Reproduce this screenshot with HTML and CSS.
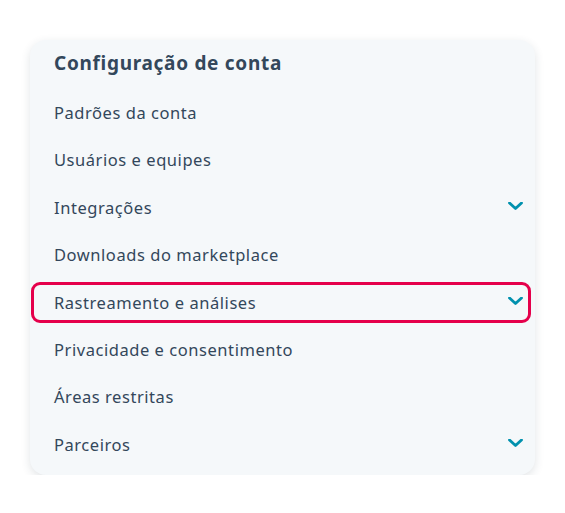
FILE: index.html
```html
<!DOCTYPE html>
<html lang="pt-BR">
<head>
	<meta charset="utf-8">
	<title>Configuração de conta</title>
	<link rel="stylesheet" href="styles.css">
</head>
<body>
	<nav class="card">
		<h2 class="title">Configuração de conta</h2>
		<ul class="menu">
			<li class="item">Padrões da conta</li>
			<li class="item">Usuários e equipes</li>
			<li class="item">Integrações
				<svg class="chevron" viewBox="0 0 15 8"><polyline points="1.5,1 7.5,6.5 13.5,1"/></svg>
			</li>
			<li class="item">Downloads do marketplace</li>
			<li class="item active">Rastreamento e análises
				<svg class="chevron" viewBox="0 0 15 8"><polyline points="1.5,1 7.5,6.5 13.5,1"/></svg>
			</li>
			<li class="item">Privacidade e consentimento</li>
			<li class="item">Áreas restritas</li>
			<li class="item">Parceiros
				<svg class="chevron" viewBox="0 0 15 8"><polyline points="1.5,1 7.5,6.5 13.5,1"/></svg>
			</li>
		</ul>
	</nav>
</body>
</html>
```

FILE: styles.css
```css
* {
	box-sizing: border-box;
}

body {
	margin: 0;
	padding: 40px 30px 0 30px;
	background-color: #ffffff;
	font-family: "Noto Sans", sans-serif;
	color: #33475b;
}

.card {
	width: 505px;
	padding: 0 4px 10px 1px;
	background-color: #f5f8fa;
	border-radius: 16px;
	box-shadow: 0 3px 10px rgba(45, 62, 80, 0.14);
}

.title {
	margin: 0;
	padding: 9px 0 0 23px;
	height: 52px;
	font-size: 19px;
	font-weight: 700;
	letter-spacing: 0.7px;
	line-height: 28px;
}

.menu {
	list-style: none;
	margin: 0;
	padding: 0;
	display: grid;
	grid-auto-rows: 41px;
	row-gap: 6.4px;
}

.item {
	display: flex;
	align-items: center;
	justify-content: space-between;
	padding: 0 5px 0 20px;
	border: 3px solid transparent;
	border-radius: 9px;
	font-size: 16.5px;
	letter-spacing: 0.55px;
}

	.item.active {
		border-color: #e5004b;
	}

.chevron {
	width: 15px;
	height: 8px;
	margin-top: -3px;
	fill: none;
	stroke: #0091ae;
	stroke-width: 2.8;
	stroke-linecap: round;
	stroke-linejoin: round;
}
```
